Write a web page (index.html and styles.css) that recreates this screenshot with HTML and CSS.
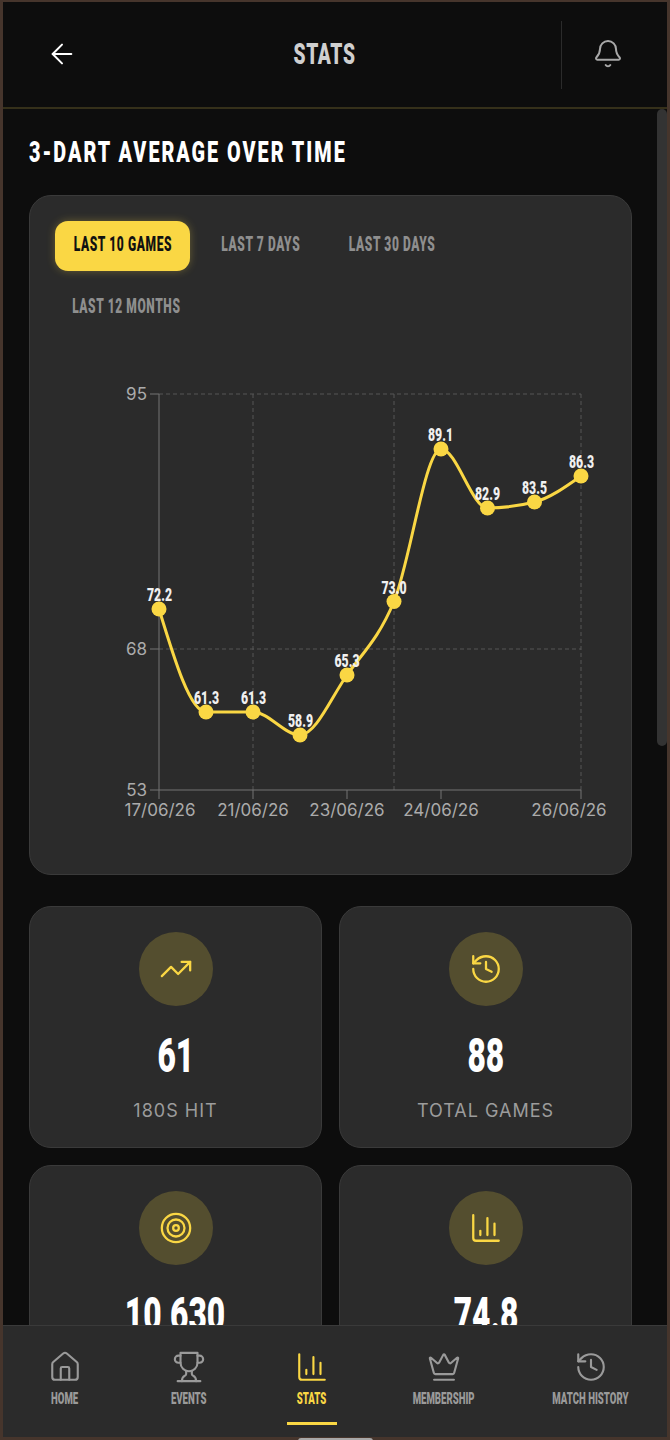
FILE: index.html
```html
<!DOCTYPE html>
<html lang="en">
<head>
  <meta charset="UTF-8" />
  <title>Stats</title>
  <link rel="stylesheet" href="styles.css">
</head>
<body>
  <div class="app">
    <header class="topbar">
      <button class="back-btn" aria-label="Back">
        <svg class="icon icon-back" viewBox="0 0 24 24"><path d="m12 19-7-7 7-7"/><path d="M19 12H5"/></svg>
      </button>
      <div class="topbar-title"><span class="squeeze">Stats</span></div>
      <div class="bell-box">
        <svg class="icon icon-bell" viewBox="0 0 24 24"><path d="M10.268 21a2 2 0 0 0 3.464 0"/><path d="M3.262 15.326A1 1 0 0 0 4 17h16a1 1 0 0 0 .74-1.673C19.41 13.956 18 12.499 18 9A6 6 0 0 0 6 9c0 3.499-1.411 4.956-2.738 6.326"/></svg>
      </div>
    </header>

    <main class="content">
      <div class="scroll-thumb"></div>
      <h1 class="section-title"><span class="squeeze">3-Dart Average Over Time</span></h1>

      <section class="chart-card">
        <div class="filters">
          <button class="filter f-games active"><span class="squeeze">Last 10 Games</span></button>
          <button class="filter f-week"><span class="squeeze">Last 7 Days</span></button>
          <button class="filter f-month"><span class="squeeze">Last 30 Days</span></button>
          <button class="filter f-year"><span class="squeeze">Last 12 Months</span></button>
        </div>

        <svg class="chart" viewBox="55 332 551 517">
          <g class="grid">
            <path d="M159 393H581M159 648H581"/>
            <path d="M253 393V789M394 393V789M581 393V789"/>
          </g>
          <g class="axis">
            <path d="M159 393V789H581"/>
            <path d="M150 393H159M150 648H159M150 789H159"/>
            <path d="M159 789V798M253 789V798M347 789V798M441 789V798M581 789V798"/>
          </g>
          <g class="tick-labels">
            <text class="y-tick" x="147" y="399">95</text>
            <text class="y-tick" x="147" y="654">68</text>
            <text class="y-tick" x="147" y="795">53</text>
            <text x="160" y="815">17/06/26</text>
            <text x="253" y="815">21/06/26</text>
            <text x="347" y="815">23/06/26</text>
            <text x="441" y="815">24/06/26</text>
            <text x="569" y="815">26/06/26</text>
          </g>
          <path class="line" d="M159 608C174.7 659.5 190.3 711 206 711C221.7 711 237.3 711 253 711C268.7 711 284.3 734 300 734C315.7 734 331.3 696.3 347 674C362.7 651.7 378.3 638.1 394 600.5C409.7 562.9 425.3 448 441 448C456.5 448 472 507 487.5 507C503.2 507 518.8 505 534.5 501C550 497 565.5 486 581 475"/>
          <g class="dots">
            <circle cx="159" cy="608" r="7.5"/>
            <circle cx="206" cy="711" r="7.5"/>
            <circle cx="253" cy="711" r="7.5"/>
            <circle cx="300" cy="734" r="7.5"/>
            <circle cx="347" cy="674" r="7.5"/>
            <circle cx="394" cy="600.5" r="7.5"/>
            <circle cx="441" cy="448" r="7.5"/>
            <circle cx="487.5" cy="507" r="7.5"/>
            <circle cx="534.5" cy="501" r="7.5"/>
            <circle cx="581" cy="475" r="7.5"/>
          </g>
          <g class="values">
            <text x="147" y="600" textLength="25" lengthAdjust="spacingAndGlyphs">72.2</text>
            <text x="194" y="703" textLength="25" lengthAdjust="spacingAndGlyphs">61.3</text>
            <text x="241" y="703" textLength="25" lengthAdjust="spacingAndGlyphs">61.3</text>
            <text x="288" y="726" textLength="25" lengthAdjust="spacingAndGlyphs">58.9</text>
            <text x="334.5" y="666" textLength="25" lengthAdjust="spacingAndGlyphs">65.3</text>
            <text x="381.5" y="593" textLength="25" lengthAdjust="spacingAndGlyphs">73.0</text>
            <text x="428" y="440" textLength="25" lengthAdjust="spacingAndGlyphs">89.1</text>
            <text x="475" y="499" textLength="25" lengthAdjust="spacingAndGlyphs">82.9</text>
            <text x="522" y="493" textLength="25" lengthAdjust="spacingAndGlyphs">83.5</text>
            <text x="569" y="467" textLength="25" lengthAdjust="spacingAndGlyphs">86.3</text>
          </g>
        </svg>
      </section>

      <section class="tiles">
        <div class="tile">
          <div class="tile-icon">
            <svg class="icon" viewBox="0 0 24 24"><path d="M22 7 13.5 15.5 8.5 10.5 2 17"/><path d="M16 7h6v6"/></svg>
          </div>
          <div class="tile-value"><span class="squeeze">61</span></div>
          <div class="tile-label">180s Hit</div>
        </div>
        <div class="tile">
          <div class="tile-icon">
            <svg class="icon" viewBox="0 0 24 24"><path d="M3 12a9 9 0 1 0 9-9 9.75 9.75 0 0 0-6.74 2.74L3 8"/><path d="M3 3v5h5"/><path d="M12 7v5l4 2"/></svg>
          </div>
          <div class="tile-value"><span class="squeeze">88</span></div>
          <div class="tile-label">Total Games</div>
        </div>
        <div class="tile">
          <div class="tile-icon">
            <svg class="icon" viewBox="0 0 24 24"><circle cx="12" cy="12" r="10"/><circle cx="12" cy="12" r="6"/><circle cx="12" cy="12" r="2"/></svg>
          </div>
          <div class="tile-value"><span class="squeeze">10,630</span></div>
        </div>
        <div class="tile">
          <div class="tile-icon">
            <svg class="icon" viewBox="0 0 24 24"><path d="M3 3v16a2 2 0 0 0 2 2h16"/><path d="M18 17V9"/><path d="M13 17V5"/><path d="M8 17v-3"/></svg>
          </div>
          <div class="tile-value"><span class="squeeze">74.8</span></div>
        </div>
      </section>
    </main>

    <nav class="bottom-nav">
      <a class="nav-item">
        <svg class="icon" viewBox="0 0 24 24"><path d="M15 21v-8a1 1 0 0 0-1-1h-4a1 1 0 0 0-1 1v8"/><path d="M3 10a2 2 0 0 1 .709-1.528l7-5.999a2 2 0 0 1 2.582 0l7 5.999A2 2 0 0 1 21 10v9a2 2 0 0 1-2 2H5a2 2 0 0 1-2-2z"/></svg>
        <span class="squeeze">Home</span>
      </a>
      <a class="nav-item">
        <svg class="icon" viewBox="0 0 24 24"><path d="M6 9H4.5a2.5 2.5 0 0 1 0-5H6"/><path d="M18 9h1.5a2.5 2.5 0 0 0 0-5H18"/><path d="M4 22h16"/><path d="M10 14.66V17c0 .55-.47.98-.97 1.21C7.85 18.75 7 20.24 7 22"/><path d="M14 14.66V17c0 .55.47.98.97 1.21C16.15 18.75 17 20.24 17 22"/><path d="M18 2H6v7a6 6 0 0 0 12 0V2Z"/></svg>
        <span class="squeeze">Events</span>
      </a>
      <a class="nav-item active">
        <svg class="icon" viewBox="0 0 24 24"><path d="M3 3v16a2 2 0 0 0 2 2h16"/><path d="M18 17V9"/><path d="M13 17V5"/><path d="M8 17v-3"/></svg>
        <span class="squeeze">Stats</span>
      </a>
      <a class="nav-item">
        <svg class="icon" viewBox="0 0 24 24"><path d="M11.562 3.266a.5.5 0 0 1 .876 0L15.39 8.87a1 1 0 0 0 1.516.294L21.183 5.5a.5.5 0 0 1 .798.519l-2.834 10.246a1 1 0 0 1-.956.734H5.81a1 1 0 0 1-.957-.734L2.02 6.02a.5.5 0 0 1 .798-.519l4.276 3.664a1 1 0 0 0 1.516-.294z"/><path d="M5 21h14"/></svg>
        <span class="squeeze">Membership</span>
      </a>
      <a class="nav-item">
        <svg class="icon" viewBox="0 0 24 24"><path d="M3 12a9 9 0 1 0 9-9 9.75 9.75 0 0 0-6.74 2.74L3 8"/><path d="M3 3v5h5"/><path d="M12 7v5l4 2"/></svg>
        <span class="squeeze">Match History</span>
      </a>
    </nav>
  </div>
  <div class="home-indicator"></div>
</body>
</html>
```

FILE: styles.css
```css
* {
  box-sizing: border-box;
}

html, body {
  margin: 0;
  height: 1440px;
  overflow: hidden;
}

body {
  background: #46352c;
  font-family: 'Roboto', 'Liberation Sans', sans-serif;
  position: relative;
}

.app {
  margin: 2px 3px 0;
  height: 1435px;
  display: flex;
  flex-direction: column;
  background: #0d0d0d;
}

.icon {
  width: 34px;
  height: 34px;
  fill: none;
  stroke: currentColor;
  stroke-width: 1.5;
  stroke-linecap: round;
  stroke-linejoin: round;
  display: block;
}

/* no condensed display face is installed, so the headings are squeezed */
.squeeze {
  display: inline-block;
  white-space: nowrap;
  transform: scaleX(0.6);
}

/* Top bar */
.topbar {
  flex: none;
  height: 107px;
  padding-top: 1px;
  display: grid;
  grid-template-columns: 110px 1fr 106px;
  align-items: center;
  border-bottom: 2px solid #35301a;
}

.back-btn {
  background: none;
  border: 0;
  padding: 0 0 3px 43px;
  color: #fff;
}

.icon-back {
  width: 32px;
  height: 32px;
}

.topbar-title {
  margin-top: -4px;
  padding-right: 24px;
  text-align: center;
  text-transform: uppercase;
  font-weight: 900;
  font-size: 30px;
  letter-spacing: 1px;
  color: #cfcfcf;
}

.topbar-title .squeeze {
  transform: scaleX(0.64);
}

.bell-box {
  height: 68px;
  border-left: 1px solid #2b2b2b;
  padding: 0 14px 4px 0;
  display: flex;
  align-items: center;
  justify-content: center;
  color: #a8a8a8;
}

.icon-bell {
  width: 32px;
  height: 32px;
}

/* Scrolling area */
.content {
  flex: 1;
  min-height: 0;
  overflow: hidden;
  position: relative;
  padding: 25px 35px 0 26px;
}

.scroll-thumb {
  position: absolute;
  top: 0;
  right: 0;
  width: 10px;
  height: 637px;
  background: #333;
  border-radius: 5px;
}

.section-title {
  margin: 0 0 25px;
  font-size: 30px;
  line-height: 36px;
  font-weight: 900;
  letter-spacing: 3px;
  text-transform: uppercase;
  color: #fff;
}

.section-title .squeeze {
  transform-origin: left center;
  transform: scaleX(0.66);
}

.chart-card {
  height: 680px;
  padding: 25px 25px 0;
  background: #2b2b2b;
  border: 1px solid #3a3a3a;
  border-radius: 22px;
}

.filters {
  display: flex;
  flex-wrap: wrap;
  gap: 12px 13px;
}

.filter {
  height: 50px;
  padding: 0;
  background: transparent;
  border: 0;
  border-radius: 13px;
  font-family: inherit;
  font-size: 20px;
  font-weight: 900;
  letter-spacing: 1px;
  text-transform: uppercase;
  color: #8f8f8f;
  display: flex;
  align-items: center;
  justify-content: center;
}

.filter .squeeze {
  margin-top: -4px;
}

.f-games { width: 135px; }
.f-week { width: 115px; }
.f-month { width: 123px; }
.f-year { width: 143px; }

.filter.active {
  background: #fad744;
  color: #111;
  box-shadow: 0 0 8px rgba(250, 215, 68, 0.3);
}

.chart {
  display: block;
  width: 551px;
  height: 517px;
}

.grid path {
  fill: none;
  stroke: #565656;
  stroke-width: 1;
  stroke-dasharray: 4 3;
}

.axis path {
  fill: none;
  stroke: #747474;
  stroke-width: 1;
}

.tick-labels text {
  font-family: Inter, sans-serif;
  font-size: 17px;
  fill: #ababab;
  text-anchor: middle;
}

.tick-labels .y-tick {
  text-anchor: end;
}

.line {
  fill: none;
  stroke: #fad744;
  stroke-width: 3;
}

.dots circle {
  fill: #fad744;
}

.values text {
  font-size: 18px;
  font-weight: 900;
  fill: #f0f0f0;
}

/* Stat tiles */
.tiles {
  margin-top: 31px;
  display: grid;
  grid-template-columns: 293px 293px;
  gap: 17px;
}

.tile {
  min-height: 242px;
  padding: 25px 10px 24px;
  display: flex;
  flex-direction: column;
  align-items: center;
  background: #2b2b2b;
  border: 1px solid #3a3a3a;
  border-radius: 22px;
}

.tile-icon {
  width: 74px;
  height: 74px;
  border-radius: 50%;
  background: #544e2f;
  color: #fad744;
  display: flex;
  align-items: center;
  justify-content: center;
}

.tile-icon .icon {
  stroke-width: 1.6;
}

.tile-value {
  margin-top: 20px;
  font-size: 48px;
  line-height: 60px;
  font-weight: 900;
  color: #fff;
}

.tile-value .squeeze {
  transform: scaleX(0.66);
}

.tile-label {
  margin-top: 13px;
  font-family: Inter, sans-serif;
  font-size: 18px;
  line-height: 24px;
  letter-spacing: 1px;
  text-transform: uppercase;
  color: #9c9c9c;
}

/* Bottom nav */
.bottom-nav {
  flex: none;
  height: 112px;
  display: grid;
  grid-template-columns: 124px 123px 123px 141px 153px;
  background: #2b2b2b;
  border-top: 1px solid #3a3a3a;
}

.nav-item {
  display: flex;
  flex-direction: column;
  align-items: center;
  padding-top: 24px;
  color: #9a9a9a;
  position: relative;
}

.nav-item span {
  margin-top: 6px;
  font-size: 16px;
  line-height: 18px;
  font-weight: 900;
  text-transform: uppercase;
}

.nav-item.active {
  color: #fad744;
}

.nav-item.active::after {
  content: "";
  position: absolute;
  left: 37px;
  bottom: 12px;
  width: 50px;
  height: 3px;
  background: #fad744;
}

.home-indicator {
  position: absolute;
  left: 298px;
  top: 1438px;
  width: 75px;
  height: 6px;
  border-radius: 3px;
  background: #a8a8a8;
}
```
